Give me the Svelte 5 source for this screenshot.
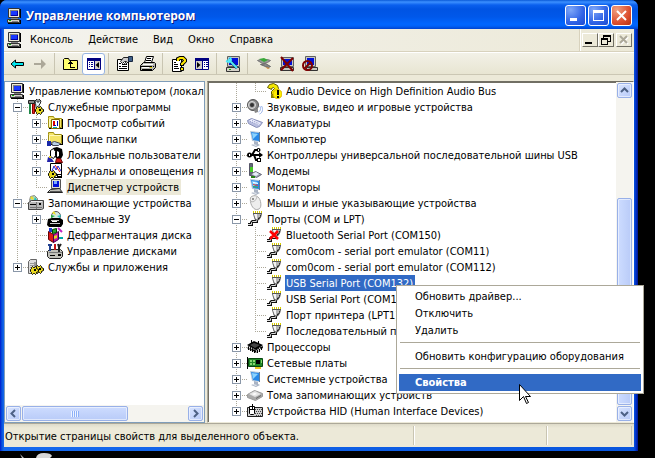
<script lang="ts">
  type Row = {
    label: string;
    icon: string;
    guides?: string;
    toggle?: '+' | '-';
    state?: 'inactive' | 'selected';
  };

  const pc = `<path fill="#ece9d8" stroke="#333" d="M2.500.5h11v9h-11z"/><path fill="#0000a8" d="M4 2h8v6H4z"/><path fill="#1838ff" d="M5 3h6v4H5z"/><path fill="#808080" d="M4 2h8v1H5v5H4z"/><path fill="#d4d0c8" stroke="#333" d="M1.500 11.500h12v3h-12z"/><path fill="#000" d="M14 1h1v9h-1zM14 12h1v4h-1zM2 15h13v1H2z"/><path fill="#808080" d="M5 10h7v1H5zM6 13h6v1H6z"/><path fill="#0a0" d="M3 12h2v1H3z"/>`;
  const plug = `<path fill="none" stroke="#111" stroke-width="3" d="M9.500 8v2.500h-4l-1 1v2H1"/><path fill="none" stroke="#ddd" d="M9.500 7v3.500h-4l-1 1v2H1"/><path fill="#b4b4b4" stroke="#555" d="M6.500 2.500h8l-1 4-2 2.500h-3l-1-2.500z"/><path fill="#f4f4f4" d="M7 3h3v5H9L8 6z"/><path fill="#222" d="M13 4h1l-1 3-2 2v-2l2-1z"/><path fill="#fff" d="M6 0h9v2H6z"/><path fill="#d8cc00" d="M6 0h1v2H6zM8 0h1v2H8zM10 0h1v2h-1zM12 0h1v2h-1zM14 0h1v2h-1z"/><path fill="#555" d="M6 2h9v1H6z"/>`;
  const monitor = `<path fill="#b8c8d8" d="m3 0 10 1v10l-8-1z"/><path fill="#2788e8" d="m4 1 8 1v8L6 9z"/><path fill="#8bd3ff" d="m5 2 6 1-5 5z"/><path fill="#5d7c9d" d="M12 1h1v10h-1z"/><path fill="#a9b3c4" d="m7 10 4 1v2l2 1-4 2-5-2 3-1z"/><path fill="#e4e9f0" d="m6 13 4 1-1 1-3-1z"/>`;
  const folder = `<path fill="#f4e468" stroke="#a09010" d="M1.500 3.500v-2h5l1 2h7v9h-13z"/><path fill="#fff8b8" d="M2 4h12v1H3v7H2z"/><path fill="#000" d="M2 13h13V4h1v10H2z"/>`;
  const gear = `<path fill="#e8d820" stroke="#000" d="m9.500 7.500 1 1h1l1-1 1 1v1l2 1v2l-2 1v1l-1 1-1-1h-1l-1 1-1-1v-1l-1-1v-2l1-1v-1z"/><path d="M11 10h2v2h-2z"/>`;

  const icons: Record<string, string> = {
    pc,
    plug,
    monitor,
    back: `<path fill="#00e8f0" stroke="#000" d="m2 8 4.500-4v2.500h8v3h-8V12z"/>`,
    forward: `<path fill="#aca899" d="M2 7h7V3l5 5-5 5V9H2z"/>`,
    up: `<path fill="#ffff70" stroke="#000" d="M.5 13.500v-10l1-1h4l1 2h8v9z"/><path fill="#000" d="M5 7h5v1H5zM6 6h3v1H6zM7 5h1v7H7zM7 11h5v1H7z"/>`,
    panel: `<path fill="#fff" stroke="#000080" d="M1.500 2.500h13v11h-13z"/><path fill="#000080" d="M1 2h14v3H1zM8 4h1v10H8zM3 6h1v1H3zM5 6h2v1H5zM3 8h1v1H3zM5 8h2v1H5zM3 10h1v1H3zM5 10h2v1H5z"/><path fill="#d4d0c8" d="M9 5h5v8H9z"/><path d="M13 6v6L9.500 9z"/>`,
    panel2: `<path fill="#d4d0c8" stroke="#000080" d="M1.500 2.500h13v11h-13z"/><path fill="#fff" d="M9 5h5v8H9z"/><path fill="#000080" d="M1 2h14v3H1zM8 4h1v10H8zM10 6h1v1h-1zM12 6h2v1h-2zM10 8h1v1h-1zM12 8h2v1h-2zM10 10h1v1h-1zM12 10h2v1h-2z"/><path d="M3 6v6l3.500-3z"/>`,
    props: `<path fill="#fff" stroke="#000" d="M.5 3.500h11v11H.5z"/><path d="M2 7h2v1H2zM5 8h5v1H5zM2 10h2v1H2zM5 10h5v1H5zM2 12h8v1H2z"/><path fill="#ccc" stroke="#222" d="m3.500 5.500 3-4h5v4l-3 3-1-1 2-2h-2l-2 2z"/><path fill="#406088" stroke="#182840" d="M11.500.5h4v5h-4z"/>`,
    print: `<path fill="#fff" stroke="#000" d="m4.500 6.500 2-6h7l-2 6z"/><path d="M7 2h4v1H7zM6 4h5v1H6z"/><path fill="#b8b8b0" stroke="#000" d="m.5 9.500 3-3h11l1 1v4l-3 3H.5z"/><path d="M1 10h11v1H1zM13 10h1v1h-1zM2 13h10v1H2z"/><path fill="#fff" d="M3 8h10v1H3zM2 11h7v1H2z"/><path fill="#e0d000" d="M10 11h2v1h-2z"/>`,
    help: `<path fill="#fff" stroke="#000" d="M1.500 3.500h9v12h-9z"/><path d="M3 6h2v1H3zM3 8h4v1H3zM3 10h4v1H3zM3 12h5v1H3z"/><path fill="none" stroke="#000" stroke-width="4" d="M7 5V3l2-1h3l2 2v1l-3 3v2"/><path fill="none" stroke="#ffe800" stroke-width="2" d="M7 5V3l2-1h3l2 2v1l-3 3v1"/><path fill="#ffe800" stroke="#000" d="M9.500 11.500h3v3h-3z"/>`,
    scan: `<path fill="#c8c8c0" stroke="#606060" d="M2.500.5h12v10h-12z"/><path fill="#0010d8" d="M4 2h9v7H4z"/><path fill="#d4d0c8" stroke="#333" d="M1.500 11.500h13v4h-13z"/><path fill="#0b0" d="M4 13h2v1H4z"/><path fill="none" stroke="#003050" stroke-width="3" d="m4 4 8 8"/><path fill="none" stroke="#50e8f8" stroke-width="2" d="m3 3 9 9M1 5l3 1 2-2-1-3"/>`,
    legacy: `<path fill="#999" stroke="#777" d="m1.500 4.500 3-1 3 1 4-1 3 1-3 2-5 1z"/><path fill="#38a838" d="m3 3 5-1 4 2-4 2z"/><path fill="#888" stroke="#666" d="m4.500 8.500 5-1 5 3-2 1-3-1z"/><path fill="#c98232" d="m9 11 5 1-2 1z"/>`,
    uninstall: `<path fill="#c8c8c0" stroke="#606060" d="M2.500 1.500h12v9h-12z"/><path fill="#0010d8" d="M4 3h9v6H4z"/><path fill="#c8c8c0" stroke="#333" d="M1.500 11.500h13v3h-13z"/><path fill="none" stroke="#800000" stroke-width="2" d="m2 1 12 14M14 2 2 14"/>`,
    disable: `<path fill="#c8c8c0" stroke="#606060" d="M3.500.5h10v10h-10z"/><path fill="#0010d8" d="M5 2h7v7H5z"/><path fill="#c8c8c0" stroke="#333" d="M4.500 11.500h11v3h-11z"/><circle cx="5.500" cy="9.500" r="4.500" fill="none" stroke="#800000" stroke-width="2"/><path stroke="#800000" stroke-width="2" d="m2.500 12.500 6-6"/>`,
    tools: `<path fill="#e02020" stroke="#800" d="M4.500 4.500h2v10h-2z"/><path fill="#888" stroke="#222" d="M.5 1.500h6v3h-6z"/><path fill="#208848" d="M1 5h2v10H1z"/><path fill="#e8f8ff" stroke="#222" d="M7.500 4.500 7 2l2-2v3h2V0l2 2-1 3-1 1v5H8.500z"/>${gear}`,
    events: `${folder}<path fill="#fff" stroke="#806800" d="M4.500 4.500h8v9h-8z"/><path fill="#d00" d="M6 6h2v5H6z"/><path fill="#0000c0" d="M10 6h1v5h-1zM7 10h2v1H7z"/><path fill="#0aa" d="M6 12h4v1H6z"/>`,
    shared: `${folder}<path fill="#b8d0e8" stroke="#445" d="m4.500 11.500 3-1 6 2-2 2h-6z"/><path fill="#1828a8" d="M0 10h4v5H0z"/>`,
    users: `<path d="m6 1 4-1 5 2 1 6-2 4-5-1-3-4z"/><path fill="#fff" stroke="#000" d="m3.500 3.500 3-2 2 3v4l-2 3-3-2z"/><path fill="#fff" d="m10 4 2 1v4l-2 1z"/><path fill="#d01818" stroke="#600" d="m8.500 15.500 1-4h4l2 4z"/><path fill="#22a" d="m1 10 4 2 2 3H0z"/><path fill="#e0c820" d="M2 9h2v2H2z"/>`,
    logs: `<path fill="#fff" stroke="#000" d="M3.500.5h11v14h-11z"/><path fill="none" stroke="#22d" d="m5 8 2-5 2 4 2-4 3 5"/><path fill="none" stroke="#d11" d="m8 2 5 7"/><g transform="translate(-6)">${gear}</g><path d="M10 11h5v4h-5z"/><path fill="#fff" d="M11 12h3v1h-3z"/>`,
    device: `<path fill="#e0ded0" stroke="#555" d="M4.500.5h9v9h-9z"/><path fill="#0010d8" d="M6 2h6v6H6z"/><path fill="#79aaff" d="M7 2h3v3H7z"/><path fill="#c0c0b8" stroke="#222" d="m3.500 10.500 9-1 3 4H.5z"/><path fill="#555" d="M3 12h11v1H3z"/>`,
    storage: `<path fill="#b4d8b0" stroke="#888" d="m1.500 5.500 1-4 4-1 3 3v3z"/><path fill="#f0e020" d="m4 1 2 4-4-2z"/><path fill="#20c0c0" d="m7 2-1 3h3z"/><path fill="#b8b8b8" stroke="#444" d="m.5 7.500 3-2h12v8l-2 1H.5z"/><path d="M2 9h6v1H2zM11 8h2v2h-2z"/><path fill="#eee" d="M3 6h11v1H3z"/><path fill="#777" d="M8 7h1v7H8zM2 12h12v1H2z"/>`,
    removable: `<circle cx="9" cy="5" r="4.500" fill="#d0e8e0" stroke="#555"/><path fill="#f0e020" d="m9 4-4-2 2-2z"/><path fill="#20c0c0" d="m10 5 4-1-1 3z"/><path fill="#20a840" d="m8 5-4 2V4z"/><path d="m1 8 4-1h8l3 2v4l-2 3H2l-2-2z"/><path fill="#ccc" d="M4 9h8v1H4zM3 12h10v1H3z"/><path fill="#fff" d="M5 10h5v1H5z"/>`,
    defrag: `<path fill="#e01818" stroke="#600" d="m1.500 4.500 5 3v8l-5-3z"/><path fill="#c018a0" stroke="#404" d="m6.500 7.500 5-3v8l-5 3z"/><path fill="#28a828" stroke="#040" d="m5.500 2.500 4-1v4l-4 1z"/><path fill="#e8d820" d="m7 9 3-1v3l-3 1z"/><path fill="#2038d0" d="M2 1h3v4H2z"/><path fill="none" stroke="#c020c0" stroke-width="2" d="m11 1 4 4"/><path fill="none" stroke="#00a8a8" stroke-width="2" d="M12 11h4"/>`,
    disks: `<path fill="#c0c0b8" stroke="#222" d="m.5 8.500 2-2h11l2 2v5l-2 2h-11l-2-2z"/><path d="M3 12h5v1H3zM11 11h3v2h-3z"/><path fill="#777" d="M2 9h13v1H2z"/><path fill="none" stroke="#204090" stroke-width="2" d="M3 1v7M1 2h4"/><path fill="none" stroke="#c01818" stroke-width="2" d="M8 1v6"/><path fill="none" stroke="#222" stroke-width="2" d="m11 1 1 3 2-3M12 3v6"/>`,
    services: `<path fill="#ddd" stroke="#666" d="m.5 2.500 2-2h6v12l-2 2h-6z"/><path fill="#999" d="M6 3h2v10l-1 1H6zM2 4h4v1H2zM2 6h4v1H2zM2 8h4v1H2z"/><g transform="translate(0 -1)">${gear}</g><g transform="translate(-5 0)">${gear}</g>`,
    unknown: `<path fill="#f4e800" stroke="#605800" d="m1.500 4.500 2-3 4-1 4 2 1 3-4 4v2h-3V8.500l3-3-1-1-2 1v1z"/><path fill="#888000" d="M5 12h4v3H5z"/><circle cx="11.500" cy="11" r="4.500" fill="#ffee00" stroke="#d8b800"/><path d="M11 7h2v5h-2zM11 13h2v2h-2z"/>`,
    sound: `<circle cx="6" cy="6" r="5.500" fill="#888" stroke="#555"/><circle cx="5" cy="6" r="3.500" fill="#999" stroke="#ddd"/><circle cx="5" cy="6" r="2" fill="#333"/><path fill="#888" d="m7 11 4-2v4l-3 1z"/><path fill="none" stroke="#94afe8" d="M12.500 7c2 2 1 5-1 6M14.500 7c2 3 1 7-2 8"/>`,
    keyboard: `<path fill="#b8bee0" stroke="#868eb8" d="m.5 5.500 4-2 11 4-3 4-3 1-8-4z"/><path fill="#eef0ff" d="m2 6 3-2 9 4-3 2z"/><path fill="none" stroke="#8a92c0" stroke-dasharray="1 1" d="m3 6.500 8 3M5 5.500l7 3"/>`,
    usb: `<path fill="none" stroke="#000" stroke-width="2" d="M2 8h12M5 8l3-5h3M7 8l2 5h3"/><circle cx="2.500" cy="8" r="2.500"/><path d="m12 5 4 3-4 3z"/><circle cx="11.500" cy="3" r="2"/><path d="M10 11h4v4h-4z"/><path fill="#fff" d="M11 2h1v2h-1zM2 7h1v2H2zM11 12h2v2h-2z"/>`,
    modem: `<path fill="#606878" stroke="#556" d="M2.500.5h3v12h-3z"/><path fill="#48c828" d="M3 4h3v5H3z"/><path fill="#a0a8b8" stroke="#667" d="m3.500 11.500 5-3 6 3-5 3z"/><path fill="#e8eef8" d="m5 11 4-2 3 2-3 2z"/><path fill="#288018" d="M4 13h4v2H4z"/>`,
    display: `${monitor}<path fill="#e0483c" d="m6 5 5 1v1L6 6z"/><path fill="#fff" d="m6 3 5 1v1L6 4z"/><path fill="#38b048" d="m6 7 5 1v1L6 8z"/>`,
    mouse: `<path fill="#eee" stroke="#aaa" d="M3.500 2.500c4-4 9-1 10 4s0 8-4 8-7-7-6-12z"/><path fill="none" stroke="#bbb" d="M4 6.500c3 1 5-1 6-5"/><circle cx="6" cy="4" r="1" fill="#777"/>`,
    plugOff: `${plug}<path fill="none" stroke="#f00" stroke-width="2.500" d="m4 4 8 8M12 4l-8 8"/>`,
    cpu: `<path d="m0 6 7-4 9 4-7 5z"/><path fill="#444" d="m3 6 4-2 6 2-5 3z"/><path fill="none" stroke="#000" stroke-width="3" stroke-dasharray="1 1" d="m1 8 8 4 7-4"/><path stroke="#000" d="M1.500 8v3M3.500 9v3M5.500 10v3M7.500 11v3M10.500 11v3M12.500 10v3M14.500 8v3M4.500 1v3M11.500 2v3"/>`,
    network: `<path fill="#208828" stroke="#084810" d="M1.500 3.500h14v8h-14z"/><path d="M0 2h1v12H0zM9 5h4v4H9z"/><path fill="#88d870" d="M3 5h2v2H3zM6 5h2v2H6zM3 8h2v2H3zM6 8h2v2H6zM14 5h1v3h-1z"/><path fill="#e8c820" d="M8 12h6v2H8z"/>`,
    volume: `<path fill="#aaa" stroke="#999" d="m.5 7.500 7-4 8 3v3l-7 4-8-3z"/><path fill="#e4e4e4" d="m2 7 6-3 6 3-6 3z"/><path fill="#fff" d="m5 7 3-1 2 1-3 1z"/><path fill="#666" d="m9 11 5-3v1l-5 3z"/>`,
    hid: `<path fill="#d0d0d0" stroke="#222" d="M.5 4.500h15v9H.5z"/><path fill="none" stroke="#444" stroke-dasharray="1 1" d="M8 6.500h7M9 8.500h6M8 10.500h7M9 12.500h6"/><path fill="#fff" stroke="#000" d="M2.500 3.500h5v7l-1 1h-3l-1-1z"/><path d="M5 1h1v6H5zM3 6h4v1H3z"/>`,
  };

  const consoleTree: Row[] = [
    { label: 'Управление компьютером (локаль', icon: 'pc' },
    { label: 'Служебные программы', icon: 'tools', guides: 't', toggle: '-' },
    { label: 'Просмотр событий', icon: 'events', guides: 'vt', toggle: '+' },
    { label: 'Общие папки', icon: 'shared', guides: 'vt', toggle: '+' },
    { label: 'Локальные пользователи', icon: 'users', guides: 'vt', toggle: '+' },
    { label: 'Журналы и оповещения пр', icon: 'logs', guides: 'vt', toggle: '+' },
    { label: 'Диспетчер устройств', icon: 'device', guides: 'vl', state: 'inactive' },
    { label: 'Запоминающие устройства', icon: 'storage', guides: 't', toggle: '-' },
    { label: 'Съемные ЗУ', icon: 'removable', guides: 'vt', toggle: '+' },
    { label: 'Дефрагментация диска', icon: 'defrag', guides: 'vt' },
    { label: 'Управление дисками', icon: 'disks', guides: 'vl' },
    { label: 'Службы и приложения', icon: 'services', guides: 'l', toggle: '+' },
  ];

  const deviceTree: Row[] = [
    { label: 'Audio Device on High Definition Audio Bus', icon: 'unknown', guides: 'vl' },
    { label: 'Звуковые, видео и игровые устройства', icon: 'sound', guides: 't', toggle: '+' },
    { label: 'Клавиатуры', icon: 'keyboard', guides: 't', toggle: '+' },
    { label: 'Компьютер', icon: 'monitor', guides: 't', toggle: '+' },
    { label: 'Контроллеры универсальной последовательной шины USB', icon: 'usb', guides: 't', toggle: '+' },
    { label: 'Модемы', icon: 'modem', guides: 't', toggle: '+' },
    { label: 'Мониторы', icon: 'display', guides: 't', toggle: '+' },
    { label: 'Мыши и иные указывающие устройства', icon: 'mouse', guides: 't', toggle: '+' },
    { label: 'Порты (COM и LPT)', icon: 'plug', guides: 't', toggle: '-' },
    { label: 'Bluetooth Serial Port (COM150)', icon: 'plugOff', guides: 'vt' },
    { label: 'com0com - serial port emulator (COM11)', icon: 'plug', guides: 'vt' },
    { label: 'com0com - serial port emulator (COM112)', icon: 'plug', guides: 'vt' },
    { label: 'USB Serial Port (COM132)', icon: 'plug', guides: 'vt', state: 'selected' },
    { label: 'USB Serial Port (COM133)', icon: 'plug', guides: 'vt' },
    { label: 'Порт принтера (LPT1)', icon: 'plug', guides: 'vt' },
    { label: 'Последовательный порт', icon: 'plug', guides: 'vl' },
    { label: 'Процессоры', icon: 'cpu', guides: 't', toggle: '+' },
    { label: 'Сетевые платы', icon: 'network', guides: 't', toggle: '+' },
    { label: 'Системные устройства', icon: 'monitor', guides: 't', toggle: '+' },
    { label: 'Тома запоминающих устройств', icon: 'volume', guides: 't', toggle: '+' },
    { label: 'Устройства HID (Human Interface Devices)', icon: 'hid', guides: 'l', toggle: '+' },
  ];

  const menus = ['Консоль', 'Действие', 'Вид', 'Окно', 'Справка'];

  const toolbar = [
    [{ icon: 'back', title: 'Назад' }, { icon: 'forward', title: 'Вперед' }],
    [{ icon: 'up', title: 'Вверх' }, { icon: 'panel', title: 'Дерево консоли', pressed: true }],
    [{ icon: 'props', title: 'Свойства' }, { icon: 'print', title: 'Печать' }],
    [{ icon: 'help', title: 'Справка' }, { icon: 'panel2', title: 'Панель действий' }],
    [{ icon: 'scan', title: 'Обновить конфигурацию' }],
    [
      { icon: 'legacy', title: 'Обновить драйвер' },
      { icon: 'uninstall', title: 'Удалить' },
      { icon: 'disable', title: 'Отключить' },
    ],
  ];
</script>

{#snippet icon(name: string)}
  <svg class="icon" viewBox="0 0 16 16" aria-hidden="true">{@html icons[name]}</svg>
{/snippet}

{#snippet chevron(dir: string)}
  <svg class="chevron {dir}" viewBox="0 0 9 9" aria-hidden="true">
    <path d="m1 6 3.500-3.500L8 6" fill="none" stroke="#4d6185" stroke-width="2" />
  </svg>
{/snippet}

{#snippet tree(rows: Row[], name: string)}
  <ul class="tree" aria-label={name}>
    {#each rows as row}
      <li class="row">
        {#each (row.guides ?? '').split('') as guide, i}
          <span class="guide {guide}">
            {#if row.toggle && i === (row.guides ?? '').length - 1}
              <button class="toggle" class:open={row.toggle === '-'} aria-label={row.label}></button>
            {/if}
          </span>
        {/each}
        {@render icon(row.icon)}
        <span class="label {row.state ?? ''}">{row.label}</span>
      </li>
    {/each}
  </ul>
{/snippet}

<div class="desktop">
  <div class="window">
    <header class="titlebar">
      {@render icon('pc')}
      <h1>Управление компьютером</h1>
      <button class="caption" aria-label="Свернуть">
        <svg viewBox="0 0 21 21"><path d="M5 13h7v3H5z" fill="#fff" /></svg>
      </button>
      <button class="caption" aria-label="Развернуть">
        <svg viewBox="0 0 21 21">
          <path d="M5 5h11v11H5zM6 8v7h9V8z" fill="#fff" fill-rule="evenodd" />
        </svg>
      </button>
      <button class="caption close" aria-label="Закрыть">
        <svg viewBox="0 0 21 21"><path d="m6 6 9 9M15 6l-9 9" stroke="#fff" stroke-width="2" /></svg>
      </button>
    </header>

    <nav class="menubar">
      {@render icon('pc')}
      {#each menus as menu}
        <button class="menu">{menu}</button>
      {/each}
      <div class="mdi">
        <button aria-label="Свернуть окно">
          <svg viewBox="0 0 14 12"><path d="M2 8h7v2H2z" /></svg>
        </button>
        <button aria-label="Восстановить окно">
          <svg viewBox="0 0 14 12">
            <path
              d="M4 1h8v7H9v3H2V4h2zM5 3v1h4v3h2V3zM3 6v4h5V6z"
              fill-rule="evenodd"
            />
          </svg>
        </button>
        <button class="last" aria-label="Закрыть окно" disabled>
          <svg viewBox="0 0 14 12">
            <path d="m4 3 7 7M11 3l-7 7" stroke="#fff" stroke-width="2" />
            <path d="m3 2 7 7M10 2 3 9" stroke="#aca899" stroke-width="2" />
          </svg>
        </button>
      </div>
    </nav>

    <div class="toolbar">
      {#each toolbar as group}
        <div class="group">
          {#each group as tool}
            <button class="tool" class:pressed={tool.pressed} aria-label={tool.title}>
              {@render icon(tool.icon)}
            </button>
          {/each}
        </div>
      {/each}
    </div>

    <main class="panes">
      <section class="pane console">
        {@render tree(consoleTree, 'Дерево консоли')}
        <div class="hscroll">
          <button class="arrow" aria-label="Влево">{@render chevron('left')}</button>
          <div class="thumb"></div>
          <button class="arrow end" aria-label="Вправо">{@render chevron('right')}</button>
        </div>
      </section>
      <section class="pane devices">
        {@render tree(deviceTree, 'Устройства')}
        <div class="vscroll">
          <button class="arrow" aria-label="Вверх">{@render chevron('up')}</button>
          <div class="spacer"></div>
          <div class="thumb"></div>
          <button class="arrow" aria-label="Вниз">{@render chevron('down')}</button>
        </div>
      </section>
    </main>

    <footer class="status">
      <span class="message">Открытие страницы свойств для выделенного объекта.</span>
      <span class="cell"></span>
      <span class="cell small"></span>
    </footer>
  </div>

  <svg class="behind" viewBox="0 0 60 5" aria-hidden="true">
    <path d="m20 1 4 4h-2z" fill="#bbb" />
    <path d="M36 5q1-5 8-5t8 3l-2 2z" fill="#d8d8d8" />
  </svg>

  <div class="context" role="menu">
    <button role="menuitem">Обновить драйвер...</button>
    <button role="menuitem">Отключить</button>
    <button role="menuitem">Удалить</button>
    <hr />
    <button role="menuitem">Обновить конфигурацию оборудования</button>
    <hr />
    <button role="menuitem" class="active">Свойства</button>
  </div>

  <svg class="cursor" viewBox="0 0 12 21" aria-hidden="true">
    <path d="M.5.5v16l4-4 3 7 2-1-3-6h5z" fill="#fff" stroke="#000" />
  </svg>
</div>

<style>
  :global(body) {
    background: #000;
  }

  .desktop {
    position: relative;
    box-sizing: border-box;
    min-height: 100vh;
    padding: 0 17px 7px 0;
    display: flex;
    flex-direction: column;
    overflow: hidden;
    color: #000;
    font: 11px/16px 'DejaVu Sans Condensed', 'DejaVu Sans', sans-serif;
  }

  button {
    font: inherit;
    color: inherit;
    margin: 0;
    padding: 0;
    border: 0;
    background: none;
  }

  .window {
    flex: 1;
    display: flex;
    flex-direction: column;
    padding: 0 4px 4px;
    border-radius: 7px 7px 0 0;
    background: linear-gradient(90deg, #0019cf, #0855dd 2px, #166aee 4px, #0855dd calc(100% - 4px), #0030c8 calc(100% - 2px), #00138c);
  }

  .icon {
    flex: none;
    width: 16px;
    height: 16px;
  }

  .titlebar {
    display: flex;
    align-items: center;
    gap: 2px;
    height: 29px;
    margin: 0 -4px;
    padding: 2px 6px 0;
    box-sizing: border-box;
    border-radius: 7px 7px 0 0;
    background: linear-gradient(#0a5ad8, #3c90ff 2px, #0a60ee 5px, #0054e3 9px, #0058ea 17px, #0066ff 24px, #0062f8 26px, #0043cf);
  }

  h1 {
    flex: 1;
    margin: 0 0 0 2px;
    color: #fff;
    font: bold 12px/20px 'Open Sans', sans-serif;
    text-shadow: 1px 1px #0a1883;
  }

  .caption {
    box-sizing: border-box;
    width: 21px;
    height: 21px;
    border: 1px solid #fff;
    border-radius: 3px;
    background: radial-gradient(circle at 25% 20%, #7ea7f8, #3164e6 60%, #1c4bd0);
  }

  .caption svg {
    display: block;
    margin: -1px;
    width: 21px;
    height: 21px;
  }

  .close {
    background: radial-gradient(circle at 25% 20%, #f0a080, #dd5030 60%, #b83010);
  }

  .menubar {
    display: flex;
    align-items: center;
    height: 23px;
    padding-left: 2px;
    border-bottom: 1px solid #d8d2bd;
    background: linear-gradient(90deg, #f4f3ee, #ece9d8);
    box-sizing: border-box;
  }

  .menu {
    padding: 0 8px;
    margin-right: -1px;
  }

  .mdi {
    display: flex;
    align-items: center;
    align-self: stretch;
    margin-left: auto;
    padding: 0 2px;
    border-left: 1px solid #d8d2bd;
    box-shadow: inset 1px 0 #fff;
  }

  .mdi button {
    width: 16px;
    height: 14px;
    box-sizing: border-box;
    border: 1px solid;
    border-color: #fff #716f64 #716f64 #fff;
    background: #ece9d8;
  }

  .mdi svg {
    display: block;
    width: 14px;
    height: 12px;
  }

  .mdi .last {
    margin-left: 2px;
  }

  .toolbar {
    display: flex;
    height: 23px;
    box-sizing: border-box;
    padding-left: 1px;
    border-top: 1px solid #fff;
    border-bottom: 1px solid #cbc7b4;
    background: linear-gradient(#f2f1e7, #e8e5d2);
  }

  .group {
    display: flex;
    align-items: center;
  }

  .group + .group {
    margin-left: 3px;
    padding-left: 4px;
    border-left: 1px solid #c9c5b2;
  }

  .tool {
    display: grid;
    place-items: center;
    width: 23px;
    height: 22px;
    box-sizing: border-box;
  }

  .tool.pressed {
    border: 1px solid #98b5e2;
    border-radius: 3px;
    background: #fff;
  }

  .panes {
    flex: 1;
    display: grid;
    grid-template-columns: 201fr 427fr;
    gap: 2px;
    padding-top: 6px;
    background: #ece9d8;
  }

  .pane {
    position: relative;
    min-width: 0;
    display: flex;
    background: #fff;
  }

  .console {
    flex-direction: column;
    justify-content: space-between;
    border: 1px solid #7f9db9;
  }

  .devices {
    border: 1px solid;
    border-color: #716f64 #fff #ece9d8 #aca899;
    box-shadow: inset 1px 1px #716f64;
  }

  .tree {
    flex: 1;
    min-width: 0;
    margin: 0;
    padding: 1px 0 1px 4px;
    overflow: hidden;
    list-style: none;
  }

  .devices .tree {
    padding: 1px 0 3px 20px;
  }

  .row {
    display: flex;
    height: 16px;
    white-space: nowrap;
  }

  .guide {
    flex: none;
    position: relative;
    display: grid;
    place-items: center;
    width: 19px;
  }

  .guide::before {
    content: '';
    position: absolute;
    left: 8px;
    top: 0;
    width: 1px;
    height: 16px;
    background: repeating-linear-gradient(#aca899 0 1px, transparent 1px 2px);
  }

  .guide.l::before {
    height: 9px;
  }

  .guide.t::after,
  .guide.l::after {
    content: '';
    position: absolute;
    left: 8px;
    right: 0;
    top: 8px;
    height: 1px;
    background: repeating-linear-gradient(90deg, #aca899 0 1px, transparent 1px 2px);
  }

  .toggle {
    z-index: 1;
    width: 9px;
    height: 9px;
    margin: 1px 2px 0 0;
    border: 1px solid #8a97a8;
    box-sizing: border-box;
    background:
      linear-gradient(#000, #000) center / 5px 1px no-repeat,
      linear-gradient(#000, #000) center / 1px 5px no-repeat,
      #fff;
  }

  .toggle.open {
    background: linear-gradient(#000, #000) center / 5px 1px no-repeat, #fff;
  }

  .label {
    box-sizing: border-box;
    height: 16px;
    padding: 1px 2px 0 1px;
    margin-left: 3px;
  }

  .label.inactive {
    background: #ece9d8;
  }

  .label.selected {
    background: #316ac5;
    color: #fff;
  }

  .hscroll,
  .vscroll {
    display: flex;
    gap: 1px;
    padding: 1px;
    background: #f5f4ef;
  }

  .vscroll {
    flex-direction: column;
    width: 15px;
  }

  .arrow,
  .thumb {
    box-sizing: border-box;
    border: 1px solid #98b0e8;
    border-radius: 2px;
    box-shadow: inset 0 0 0 1px #fff8;
    background: linear-gradient(135deg, #d8e4ff, #b9cbf8);
  }

  .arrow {
    flex: none;
    display: grid;
    place-items: center;
    width: 15px;
    height: 15px;
  }

  .arrow.end {
    margin-left: auto;
  }

  .hscroll .thumb {
    width: 54%;
    background:
      repeating-linear-gradient(90deg, #eef4ff 0 1px, #8cb0f8 1px 2px) center / 8px 6px no-repeat,
      linear-gradient(#cddcff, #b9cbf8);
  }

  .vscroll .thumb {
    flex: 204;
    background:
      repeating-linear-gradient(#eef4ff 0 1px, #8cb0f8 1px 2px) center / 6px 8px no-repeat,
      linear-gradient(90deg, #cddcff, #b9cbf8);
  }

  .spacer {
    flex: 97;
  }

  .chevron {
    width: 9px;
    height: 9px;
  }

  .chevron.left {
    transform: rotate(-90deg);
  }

  .chevron.right {
    transform: rotate(90deg);
  }

  .chevron.down {
    transform: rotate(180deg);
  }

  .status {
    display: flex;
    align-items: center;
    height: 24px;
    padding: 2px 2px 2px 1px;
    box-sizing: border-box;
    border-top: 1px solid #aca899;
    background: linear-gradient(#dedbc9, #ece9d8 4px, #ece9d8);
  }

  .message {
    flex: 1;
    padding-top: 3px;
  }

  .cell {
    align-self: stretch;
    width: 132px;
    border-left: 1px solid #c9c5b2;
    box-shadow: inset 1px 0 #fff;
  }

  .cell.small {
    width: 84px;
    border-right: 1px solid #c9c5b2;
  }

  .behind {
    position: absolute;
    left: 0;
    bottom: 0;
    width: 60px;
    height: 5px;
  }

  .context {
    position: absolute;
    left: 396px;
    top: 285px;
    padding: 2px;
    border: 1px solid #aca899;
    background: #fff;
  }

  .context button {
    display: block;
    width: 100%;
    padding: 0 17px 0 16px;
    line-height: 17px;
    text-align: left;
    white-space: nowrap;
  }

  .context .active {
    background: #316ac5;
    color: #fff;
    font-weight: bold;
  }

  hr {
    height: 1px;
    margin: 3px 1px 5px;
    border: 0;
    background: #aca899;
  }

  .cursor {
    position: absolute;
    left: 519px;
    top: 384px;
    width: 12px;
    height: 21px;
  }
</style>
